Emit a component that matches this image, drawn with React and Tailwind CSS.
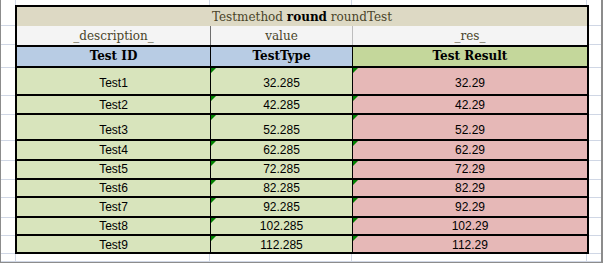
import React from "react";

const rows = [
  { id: "Test1", v: "32.285", r: "32.29", h: "h-[28px]", m: "h-[28px]", pb: "pb-[4px]" },
  { id: "Test2", v: "42.285", r: "42.29", h: "h-[19px]", m: "h-[19px]", pb: "pb-[1px]" },
  { id: "Test3", v: "52.285", r: "52.29", h: "h-[26px]", m: "h-[26px]", pb: "pb-[2px]" },
  { id: "Test4", v: "62.285", r: "62.29", h: "h-[20px]", m: "h-[20px]", pb: "pb-[2px]" },
  { id: "Test5", v: "72.285", r: "72.29", h: "h-[19px]", m: "h-[19px]", pb: "pb-[2px]" },
  { id: "Test6", v: "82.285", r: "82.29", h: "h-[18px]", m: "h-[18px]", pb: "pb-[1px]" },
  { id: "Test7", v: "92.285", r: "92.29", h: "h-[20px]", m: "h-[20px]", pb: "pb-[2px]" },
  { id: "Test8", v: "102.285", r: "102.29", h: "h-[18px]", m: "h-[18px]", pb: "pb-[1px]" },
  { id: "Test9", v: "112.285", r: "112.29", h: "h-[18px]", m: "h-[18px]", pb: "pb-[0px]" },
];

const serif = "font-['DejaVu_Serif',serif]";
const sans = "font-['Liberation_Sans',sans-serif]";

function Tri() {
  return (
    <div className="absolute left-0 top-0 w-0 h-0 border-t-[5px] border-t-[#008000] border-r-[5px] border-r-transparent" />
  );
}

function Margins({ hClass, children }) {
  return (
    <div className={`flex ${hClass}`}>
      <div className="w-[14px] h-full border-b border-[#d0d7e5]" />
      {children}
      <div className="w-[12px] h-full border-b border-[#d0d7e5]" />
    </div>
  );
}

export default function App() {
  return (
    <div className="w-[603px] h-[263px] bg-white border-l border-r-2 border-b border-[#8c8c8c] flex flex-col overflow-hidden">
      {/* top spacer */}
      <div className="flex h-[5px]">
        <div className="w-[15px] border-r border-[#d0d7e5]" />
        <div className="w-[194px] border-r border-[#d0d7e5]" />
        <div className="w-[142px] border-r border-[#d0d7e5]" />
        <div className="w-[235px] border-r border-[#d0d7e5]" />
        <div className="flex-1" />
      </div>

      {/* title + description block */}
      <div className="flex h-[40px]">
        <div className="w-[14px] flex flex-col">
          <div className="h-[21px] border-b border-[#d0d7e5]" />
          <div className="flex-1 border-b border-[#d0d7e5]" />
        </div>
        <div className="w-[574px] border-x-2 border-t-2 border-black flex flex-col">
          <div className={`h-[19px] bg-[#ddd9c4] flex items-end justify-center pb-[2px] ${serif} text-[12px] leading-[14px] text-[#494429]`}>
            <span>
              Testmethod <b className="text-black">round</b> roundTest
            </span>
          </div>
          <div className={`h-[19px] bg-[#f4f4f4] flex ${serif} text-[12px] leading-[14px] text-[#494429]`}>
            <div className="w-[193px] flex items-end justify-center pb-[2px]">_description_</div>
            <div className="w-px bg-[#6e6e6e]" />
            <div className="w-[141px] flex items-end justify-center pb-[2px]">value</div>
            <div className="w-px bg-[#bdbdbd]" />
            <div className="flex-1 flex items-end justify-center pb-[2px]">_res_</div>
          </div>
        </div>
        <div className="w-[12px] flex flex-col">
          <div className="h-[21px] border-b border-[#d0d7e5]" />
          <div className="flex-1 border-b border-[#d0d7e5]" />
        </div>
      </div>

      {/* header row */}
      <Margins hClass="h-[23px]">
        <div className={`w-[574px] border-x-2 border-y-2 border-black flex ${serif} text-[12px] leading-[14px] font-bold text-black`}>
          <div className="w-[193px] bg-[#b8cce4] flex items-end justify-center pb-[3px]">Test ID</div>
          <div className="w-px bg-black" />
          <div className="w-[141px] bg-[#b8cce4] flex items-end justify-center pb-[3px]">TestType</div>
          <div className="w-px bg-black" />
          <div className="flex-1 bg-[#c4d79b] flex items-end justify-center pb-[3px]">Test Result</div>
        </div>
      </Margins>

      {/* data rows */}
      {rows.map((r) => (
        <Margins key={r.id} hClass={r.m}>
          <div className={`w-[574px] ${r.h} border-x-2 border-b-2 border-black flex ${sans} text-[12px] leading-[14px] text-black`}>
            <div className={`w-[193px] bg-[#d8e4bc] flex items-end justify-center ${r.pb}`}>{r.id}</div>
            <div className="w-px bg-black" />
            <div className={`relative w-[141px] bg-[#d8e4bc] flex items-end justify-center ${r.pb}`}>
              <Tri />
              {r.v}
            </div>
            <div className="w-px bg-black" />
            <div className={`relative flex-1 bg-[#e6b8b7] flex items-end justify-center ${r.pb}`}>
              <Tri />
              {r.r}
            </div>
          </div>
        </Margins>
      ))}

      {/* bottom margin */}
      <div className="flex flex-1">
        <div className="w-[15px] border-r border-b border-[#d0d7e5]" />
        <div className="w-[194px] border-r border-b border-[#d0d7e5]" />
        <div className="w-[142px] border-r border-b border-[#d0d7e5]" />
        <div className="w-[235px] border-r border-b border-[#d0d7e5]" />
        <div className="flex-1 border-b border-[#d0d7e5]" />
      </div>
    </div>
  );
}
